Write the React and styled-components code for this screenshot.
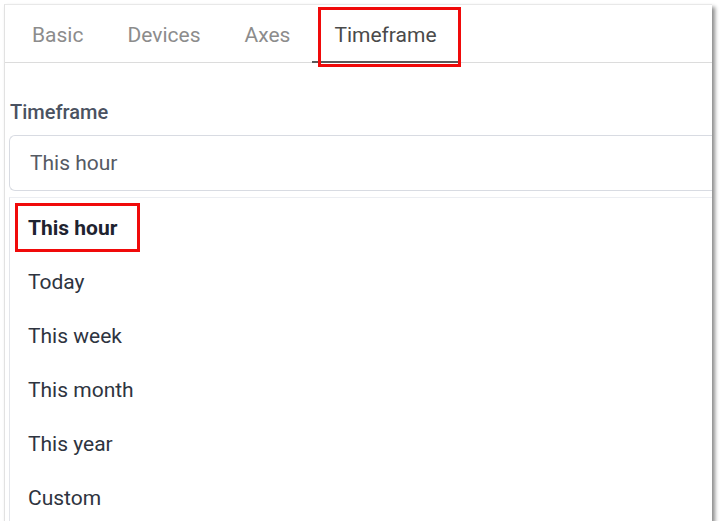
import React from "react";
import styled, { createGlobalStyle } from "styled-components";

const Global = createGlobalStyle`
  html, body { margin: 0; padding: 0; background: #ffffff; }
  body { font-family: Roboto, "Noto Sans", "Liberation Sans", sans-serif; }
`;

const Frame = styled.div`
  margin: 4px 0 0 4px;
  width: 708px;
  height: 517px;
  background: #fff;
  border-left: 1px solid #e2e2e2;
  border-top: 1px solid #e8e8e8;
  box-shadow: 3px 3px 4px rgba(0, 0, 0, 0.45);
  overflow: hidden;
  box-sizing: border-box;
`;

const TabBar = styled.div`
  display: flex;
  height: 57px;
  padding-left: 5px;
  border-bottom: 1px solid #dcdcdc;
`;

const Tab = styled.div`
  position: relative;
  display: flex;
  align-items: center;
  padding: 3px 22px 0;
  font-size: 21px;
  color: ${(p) => (p.$active ? "#4a4a4a" : "#8c8c8c")};
  border-bottom: ${(p) => (p.$active ? "2px solid #5a5a5a" : "2px solid transparent")};
  margin-bottom: -1px;
`;

const Highlight = styled.span`
  position: absolute;
  border: 3px solid #f00a0a;
  pointer-events: none;
  ${(p) => p.$css}
`;

const Body = styled.div`
  padding: 37px 0 0 4px;
`;

const Label = styled.div`
  font-size: 20px;
  font-weight: 500;
  color: #4a5261;
  margin: 0 0 11px 1px;
`;

const Select = styled.div`
  display: flex;
  align-items: center;
  height: 54px;
  padding-left: 20px;
  border: 1px solid #d8dbe2;
  border-right: none;
  border-radius: 6px 0 0 6px;
  font-size: 21px;
  color: #555a63;
`;

const Menu = styled.div`
  margin-top: 6px;
  border-left: 1px solid #e3e5ea;
  border-top: 1px solid #eceef2;
  padding-top: 3px;
`;

const Item = styled.div`
  position: relative;
  display: flex;
  align-items: center;
  height: 54px;
  padding-left: 18px;
  font-size: 21px;
  font-weight: ${(p) => (p.$selected ? 700 : 400)};
  color: ${(p) => (p.$selected ? "#1e2330" : "#2e3440")};
`;

const tabs = ["Basic", "Devices", "Axes", "Timeframe"];
const options = ["This hour", "Today", "This week", "This month", "This year", "Custom"];

export default function App() {
  return (
    <>
      <Global />
      <Frame>
        <TabBar>
          {tabs.map((t) => (
            <Tab key={t} $active={t === "Timeframe"}>
              {t}
              {t === "Timeframe" && (
                <Highlight $css="left: 6px; right: -2px; top: 2px; bottom: -6px;" />
              )}
            </Tab>
          ))}
        </TabBar>
        <Body>
          <Label>Timeframe</Label>
          <Select>This hour</Select>
          <Menu>
            {options.map((o, i) => (
              <Item key={o} $selected={i === 0}>
                {o}
                {i === 0 && <Highlight $css="left: 5px; width: 119px; top: 2px; bottom: 3px;" />}
              </Item>
            ))}
          </Menu>
        </Body>
      </Frame>
    </>
  );
}
